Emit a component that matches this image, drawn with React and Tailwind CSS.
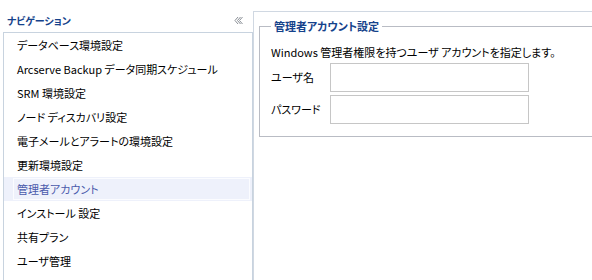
const navItems = [
  "データベース環境設定",
  "Arcserve Backup データ同期スケジュール",
  "SRM 環境設定",
  "ノード ディスカバリ設定",
  "電子メールとアラートの環境設定",
  "更新環境設定",
  "管理者アカウント",
  "インストール 設定",
  "共有プラン",
  "ユーザ管理",
];

const selected = "管理者アカウント";

function CollapseIcon() {
  // 二重のシェブロン（ナビゲーションを閉じる）
  return (
    <svg width="9" height="9" viewBox="0 0 9 9" className="text-[#8a8f96]">
      <path d="M4 1 L1 4.5 L4 8 M6.5 1 L3.5 4.5 L6.5 8 M8.5 1 L5.5 4.5 L8.5 8" fill="none" stroke="currentColor" strokeWidth="1" />
    </svg>
  );
}

export default function App() {
  return (
    <div className="flex w-[592px] h-[280px] overflow-hidden bg-white text-[11px] text-black font-['Noto_Sans_CJK_JP','Noto_Sans',sans-serif] [font-feature-settings:'palt']">
      {/* ナビゲーション */}
      <div className="flex flex-col w-[253px] shrink-0">
        <div className="flex items-end justify-between h-[32px] pl-[7px] pr-[10px] pb-[6px]">
          <span className="font-bold text-[10px] text-[#15428b] leading-none">ナビゲーション</span>
          <span className="pb-[1px]"><CollapseIcon /></span>
        </div>
        <div className="flex-1 ml-[3px] border-l border-t border-r border-[#c8d3df]">
          {navItems.map((item) => {
            const active = item === selected;
            return (
              <div
                key={item}
                className={`flex h-[24px] items-center pl-[9px] pr-[2px] ${active ? "bg-[#eef1fb]" : ""}`}
              >
                <div
                  className={`flex flex-1 h-[22px] items-center pl-[3px] border whitespace-nowrap ${
                    active ? "border-[#fbfcff] text-[#4a5aab]" : "border-transparent"
                  }`}
                >
                  {item}
                </div>
              </div>
            );
          })}
        </div>
      </div>

      {/* 右側のパネル */}
      <div className="flex-1 min-w-0 pt-[11px] overflow-hidden">
        <div className="h-full border-t border-l border-[#d0d8e2] pl-[5px] pt-[14px]">
          <div className="relative w-[380px] border border-[#b9bcc4] pl-[11px] pt-[17px] pb-[12px]">
            <span className="absolute left-[11px] -top-[8px] bg-white px-[3px] font-bold text-[#15428b] leading-[14px]">
              管理者アカウント設定
            </span>
            <div className="leading-[16px]">
              Windows 管理者権限を持つユーザ アカウントを指定します。
            </div>
            <div className="flex flex-col gap-[3px] mt-[3px]">
              <div className="flex items-center">
                <span className="w-[59px]">ユーザ名</span>
                <input className="w-[199px] h-[29px] border border-[#c6c6c6] bg-white outline-none" />
              </div>
              <div className="flex items-center">
                <span className="w-[59px]">パスワード</span>
                <input type="password" className="w-[199px] h-[29px] border border-[#c6c6c6] bg-white outline-none" />
              </div>
            </div>
          </div>
        </div>
      </div>
    </div>
  );
}
